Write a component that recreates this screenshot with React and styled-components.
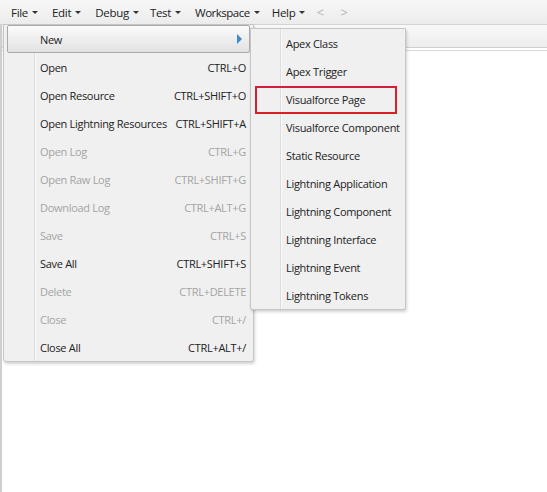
import React from "react";
import styled, { createGlobalStyle } from "styled-components";

const Global = createGlobalStyle`
  html, body { margin: 0; padding: 0; background: #fff; }
  body { font-family: "Open Sans", "Noto Sans", sans-serif; font-size: 11px; color: #222; letter-spacing: -0.3px; }
  * { box-sizing: border-box; }
`;

const Page = styled.div`
  position: relative;
  width: 547px;
  height: 492px;
  overflow: hidden;
  background: #fff;
`;

const MenuBar = styled.div`
  height: 25px;
  display: flex;
  align-items: center;
  padding-left: 11px;
  background: linear-gradient(#f7f7f7, #ececec);
  border-bottom: 1px solid #d4d4d4;
`;

const BarItem = styled.div`
  display: flex;
  align-items: center;
  gap: 4px;
  margin-right: ${(p) => p.$mr}px;
  color: ${(p) => (p.$dim ? "#b4b4b4" : "#222")};
  font-size: ${(p) => (p.$dim ? "13px" : "11.5px")};
  letter-spacing: ${(p) => (p.$tight ? "-0.5px" : "-0.3px")};
`;

const Caret = styled.span`
  width: 0;
  height: 0;
  border-left: 3px solid transparent;
  border-right: 3px solid transparent;
  border-top: 3px solid #333;
  margin-top: 1px;
`;

const Body = styled.div`
  height: calc(100% - 25px);
  border-left: 2px solid #cfcfcf;
  display: flex;
  flex-direction: column;
`;

const Strip = styled.div`
  height: 23px;
  background: linear-gradient(#f8f8f8, #ededed);
  border-bottom: 1px solid #cfcfcf;
  box-shadow: 0 2px 0 #fff, 0 3px 0 #d8d8d8;
`;

const Menu = styled.div`
  position: absolute;
  left: ${(p) => p.$x}px;
  top: ${(p) => p.$y}px;
  width: ${(p) => p.$w}px;
  padding: 0 3px 0 3px;
  background: #f0f0f0;
  border: 1px solid #c6c6c6;
  border-radius: 0 0 3px 3px;
  box-shadow: 1px 2px 3px rgba(0, 0, 0, 0.18);
  display: flex;
  flex-direction: column;
  &::before {
    content: "";
    position: absolute;
    top: 0;
    bottom: 0;
    left: ${(p) => p.$sep}px;
    width: 1px;
    background: #dcdcdc;
    box-shadow: 1px 0 0 #fafafa;
  }
`;

const Row = styled.div`
  position: relative;
  z-index: 1;
  height: 28px;
  display: flex;
  align-items: center;
  padding-left: ${(p) => p.$pl}px;
  padding-right: 3px;
  color: ${(p) => (p.$disabled ? "#a4a4a4" : "#222")};
  border: 1px solid ${(p) => (p.$active ? "#a9a9a9" : "transparent")};
  border-radius: 2px;
  background: ${(p) => (p.$active ? "linear-gradient(#fbfbfb, #e2e2e2)" : "transparent")};
  white-space: nowrap;
`;

const Label = styled.span`
  flex: 1;
`;

const Shortcut = styled.span`
  text-align: right;
`;

const Arrow = styled.span`
  width: 0;
  height: 0;
  border-top: 5px solid transparent;
  border-bottom: 5px solid transparent;
  border-left: 5px solid #3d8ad3;
  margin-right: 4px;
`;

const Highlight = styled.div`
  position: absolute;
  left: 255px;
  top: 86px;
  width: 142px;
  height: 28px;
  border: 2px solid #d7202e;
  z-index: 5;
`;

const fileItems = [
  ["Open", "CTRL+O"],
  ["Open Resource", "CTRL+SHIFT+O"],
  ["Open Lightning Resources", "CTRL+SHIFT+A"],
  ["Open Log", "CTRL+G", true],
  ["Open Raw Log", "CTRL+SHIFT+G", true],
  ["Download Log", "CTRL+ALT+G", true],
  ["Save", "CTRL+S", true],
  ["Save All", "CTRL+SHIFT+S"],
  ["Delete", "CTRL+DELETE", true],
  ["Close", "CTRL+/", true],
  ["Close All", "CTRL+ALT+/"],
];

const newItems = [
  "Apex Class",
  "Apex Trigger",
  "Visualforce Page",
  "Visualforce Component",
  "Static Resource",
  "Lightning Application",
  "Lightning Component",
  "Lightning Interface",
  "Lightning Event",
  "Lightning Tokens",
];

const bar = [
  ["File", 14],
  ["Edit", 14],
  ["Debug", 11],
  ["Test", 14],
  ["Workspace", 12, true],
  ["Help", 11],
];

export default function App() {
  return (
    <>
      <Global />
      <Page>
        <MenuBar>
          {bar.map(([t, mr, tight]) => (
            <BarItem key={t} $mr={mr} $tight={tight}>
              {t}
              <Caret />
            </BarItem>
          ))}
          <BarItem $dim $mr={17}>&lt;</BarItem>
          <BarItem $dim $mr={0}>&gt;</BarItem>
        </MenuBar>
        <Body>
          <Strip />
        </Body>

        <Menu $x={3} $y={24} $w={251} $sep={30}>
          <Row $active $pl={32}>
            <Label>New</Label>
            <Arrow />
          </Row>
          {fileItems.map(([l, s, d]) => (
            <Row key={l} $pl={32} $disabled={d}>
              <Label>{l}</Label>
              <Shortcut>{s}</Shortcut>
            </Row>
          ))}
        </Menu>

        <Menu $x={250} $y={28} $w={156} $sep={29}>
          {newItems.map((l) => (
            <Row key={l} $pl={31}>
              <Label>{l}</Label>
            </Row>
          ))}
        </Menu>
        <Highlight />
      </Page>
    </>
  );
}
